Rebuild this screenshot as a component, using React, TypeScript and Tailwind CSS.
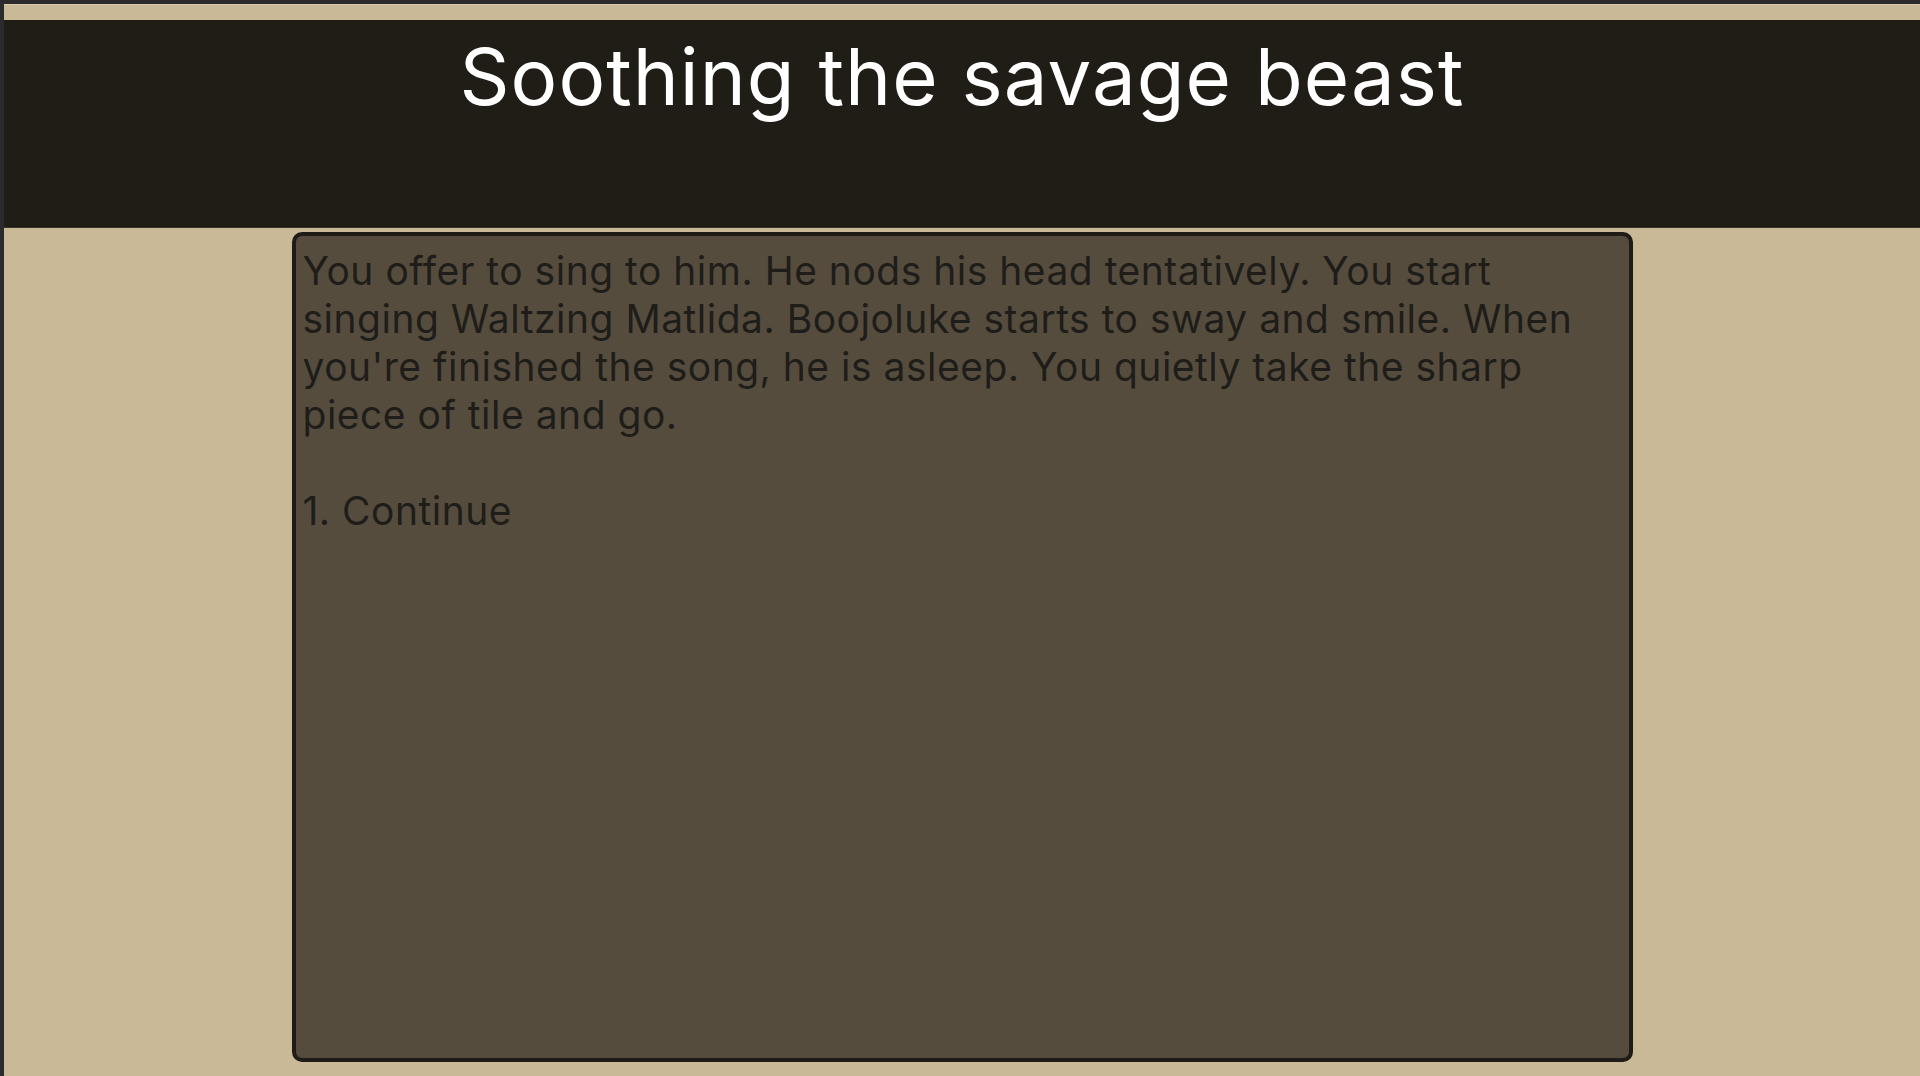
export default function App() {
  return (
    <div
      className="w-full h-[1076px] flex flex-col bg-[#c9b997] border-l-4 border-t-4 border-[#2b2b2d] overflow-hidden"
      style={{ fontFamily: 'Inter, "Noto Sans", sans-serif' }}
    >
      {/* spacer strip above header */}
      <div className="h-[16px] shrink-0 border-t border-[#d8cbad]" />

      {/* ── Header ── */}
      <header className="h-[208px] shrink-0 bg-[#201d17] border-b border-[#3a352c]">
        <h1 className="pt-[10px] text-center text-white text-[78px] leading-[94px] font-normal tracking-[1px]">
          Soothing the savage beast
        </h1>
      </header>

      {/* ── Story box ── */}
      <main className="flex-1 flex justify-center pt-[4px] pb-[14px]">
        <div className="w-[1341px] h-full rounded-[10px] border-[4px] border-[#1f1c17] bg-[#554c3e] pl-[7px] pr-[40px] pt-[11px]">
          <p className="text-[39px] leading-[48px] tracking-[0.5px] text-[#1f1d19]">
            You offer to sing to him. He nods his head tentatively. You start singing Waltzing
            Matlida. Boojoluke starts to sway and smile. When you're finished the song, he is
            asleep. You quietly take the sharp piece of tile and go.
          </p>
          <p className="mt-[48px] text-[39px] leading-[48px] tracking-[0.5px] text-[#1f1d19]">
            1. Continue
          </p>
        </div>
      </main>
    </div>
  )
}
